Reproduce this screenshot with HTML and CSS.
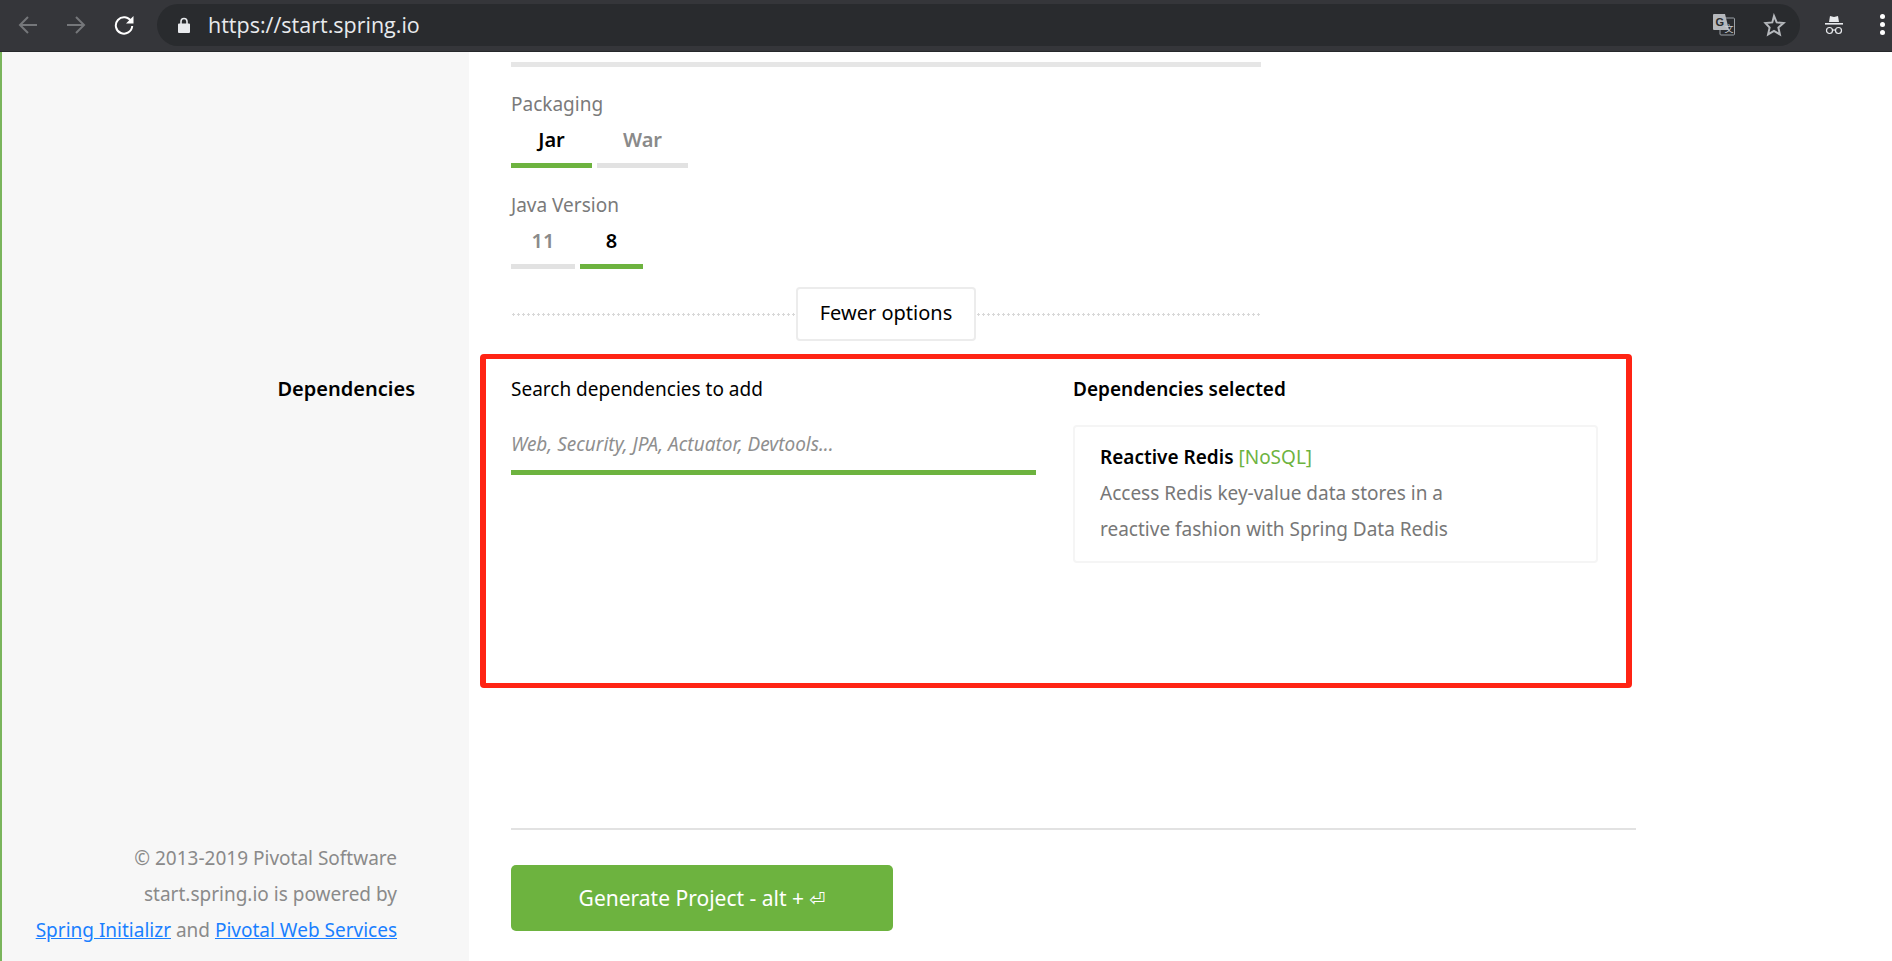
FILE: index.html
```html
<!DOCTYPE html>
<html>
<head>
    <meta charset="UTF-8">
    <title>Spring Initializr</title>
    <link rel="stylesheet" href="styles.css">
</head>
<body>

<div class="toolbar">
    <svg class="nav dim" viewBox="0 0 20 20"><path d="M19 10H2M10 2l-8 8 8 8"/></svg>
    <svg class="nav dim" viewBox="0 0 20 20"><path d="M1 10h17M10 2l8 8-8 8"/></svg>
    <svg class="nav" viewBox="0 0 20 20"><path d="M17.2 6.500A8.200 8.200 0 1 0 18.200 11"/><path class="fill" d="M19.500 1v7.500H12z"/></svg>
    <div class="omnibox">
        <svg class="lock" viewBox="0 0 12 16"><path class="body" d="M1 6.500h10a1 1 0 0 1 1 1V15a1 1 0 0 1-1 1H1a1 1 0 0 1-1-1V7.500a1 1 0 0 1 1-1z"/><path class="ring" d="M3 7V4.500a3 3 0 0 1 6 0V7"/></svg>
        <span class="url">https://start.spring.io</span>
        <svg class="translate" viewBox="0 0 22 22">
            <rect class="back" x="7" y="4" width="14.500" height="17" rx="1"/>
            <path class="front" d="M1 0h11l4 16H1a1 1 0 0 1-1-1V1a1 1 0 0 1 1-1z"/>
            <text class="g" x="2.500" y="12">G</text>
            <text class="zh" x="11.500" y="18">文</text>
        </svg>
        <svg class="star" viewBox="0 0 24 24"><path d="M12 3l2.700 6.400 6.900.6-5.200 4.600 1.500 6.800-5.900-3.600-5.900 3.600 1.500-6.800L3.400 10l6.900-.6z"/></svg>
    </div>
    <svg class="incognito" viewBox="0 0 18 20">
        <path class="hat" d="M5 1l4 1 4-1 1 6H4z"/>
        <path class="hat" d="M0 8h18v1.600H0z"/>
        <circle cx="4.500" cy="15.500" r="3"/>
        <circle cx="13.500" cy="15.500" r="3"/>
        <path d="M7.500 15h3"/>
    </svg>
    <div class="dots"><i></i><i></i><i></i></div>
</div>

<div class="page">
    <div class="side">
        <div class="side-label">Dependencies</div>
        <div class="foot">
            <p>© 2013-2019 Pivotal Software</p>
            <p>start.spring.io is powered by</p>
            <p><a href="#">Spring Initializr</a> and <a href="#">Pivotal Web Services</a></p>
        </div>
    </div>

    <div class="main">
        <div class="rule-top"></div>

        <div class="field-label">Packaging</div>
        <div class="tabs">
            <div class="tab on jar">Jar</div>
            <div class="tab war">War</div>
        </div>

        <div class="field-label">Java Version</div>
        <div class="tabs">
            <div class="tab v11">11</div>
            <div class="tab on v8">8</div>
        </div>

        <div class="more">
            <div class="more-btn">Fewer options</div>
        </div>

        <div class="mark">
            <div class="col">
                <div class="col-title">Search dependencies to add</div>
                <div class="search">Web, Security, JPA, Actuator, Devtools...</div>
            </div>
            <div class="col">
                <div class="col-title strong">Dependencies selected</div>
                <div class="card">
                    <div class="card-name">Reactive Redis <span>[NoSQL]</span></div>
                    <div class="card-desc">Access Redis key-value data stores in a<br>reactive fashion with Spring Data Redis</div>
                </div>
            </div>
        </div>

        <div class="actions">
            <div class="generate">Generate Project - alt + <span>⏎</span></div>
        </div>
    </div>
</div>

</body>
</html>
```

FILE: styles.css
```css
body{margin:0;height:961px;overflow:hidden;background:#fff;font-family:"Noto Sans",sans-serif;font-size:19px;color:#000;}
p{margin:0;}

/* browser bar */
.toolbar{
    display:flex;
    align-items:center;
    height:52px;
    box-sizing:border-box;
    padding:0 0 2px 18px;
    background:#35363a;
    border-bottom:1px solid #26282b;
}
.nav{
    width:20px;
    height:20px;
    margin-right:28px;
    flex:none;
    fill:none;
    stroke:#fff;
    stroke-width:2;
}
.nav.dim{stroke:#75777a;}
.nav .fill{fill:#fff;stroke:none;}
.omnibox{
    display:flex;
    align-items:center;
    flex:none;
    width:1643px;
    height:42px;
    margin-left:-5px;
    box-sizing:border-box;
    padding:0 14px 0 21px;
    border-radius:21px;
    background:#292b2e;
}
.lock{width:12px;height:16px;}
.lock .body{fill:#e8eaed;}
.lock .ring{fill:none;stroke:#e8eaed;stroke-width:1.600;}
.url{
    margin-left:18px;
    font-family:"Open Sans",sans-serif;
    font-size:21.500px;
    color:#e8eaed;
    flex:1;
}
.translate{width:22px;height:22px;margin-right:27px;}
.translate .back{fill:none;stroke:#9aa0a6;stroke-width:1;}
.translate .front{fill:#b5b8bc;}
.translate .g{font-family:"Liberation Sans",sans-serif;font-size:11px;font-weight:bold;fill:#292b2e;}
.translate .zh{font-family:"Noto Sans CJK SC",sans-serif;font-size:9px;fill:#c9ccd0;}
.star{width:24px;height:24px;fill:none;stroke:#b5b8bc;stroke-width:2;}
.incognito{
    width:18px;
    height:20px;
    flex:none;
    margin-left:25px;
    fill:none;
    stroke:#e8eaed;
    stroke-width:1.200;
}
.incognito .hat{fill:#e8eaed;stroke:none;}
.dots{flex:none;margin-left:37px;}
.dots i{display:block;width:5px;height:5px;margin:3px 0;border-radius:50%;background:#fff;}

/* page */
.page{display:flex;height:909px;}
.side{
    display:flex;
    flex-direction:column;
    width:469px;
    box-sizing:border-box;
    padding:325px 54px 13px 0;
    background:#f7f7f7;
    border-left:2px solid #7ab55c;
    text-align:right;
}
.side-label{
    font-weight:600;
    font-size:20px;
    line-height:24px;
}
.foot{
    margin-top:auto;
    padding-right:18px;
    color:#8a8a8a;
    line-height:36px;
    white-space:nowrap;
}
.foot a{color:#1a7fff;}

.main{
    flex:1;
    padding-left:42px;
}
.rule-top{
    width:750px;
    height:5px;
    margin-top:10px;
    background:#e6e6e6;
}
.field-label{
    margin-top:25px;
    color:#7a7a7a;
    line-height:24px;
}
.tabs{display:flex;gap:5px;margin-top:6px;}
.tab{
    height:41px;
    line-height:36px;
    border-bottom:5px solid #e2e2e2;
    text-align:center;
    font-weight:600;
    font-size:20px;
    color:#8a8a8a;
}
.tab.on{border-bottom-color:#6db33f;color:#000;}
.jar{width:81px;}
.war{width:91px;}
.v11{width:64px;}
.v8{width:63px;}

.more{
    display:flex;
    justify-content:center;
    align-items:center;
    width:750px;
    height:54px;
    margin-top:18px;
    background:radial-gradient(circle,#d8d8d8 1px,transparent 1.300px) 0 center/5px 3px repeat-x;
}
.more-btn{
    width:180px;
    height:54px;
    box-sizing:border-box;
    border:2px solid #ececec;
    border-radius:4px;
    background:#fff;
    text-align:center;
    line-height:48px;
    font-size:20px;
}

/* the red annotation round the dependency picker */
.mark{
    display:flex;
    gap:37px;
    width:1152px;
    height:334px;
    box-sizing:border-box;
    margin:13px 0 0 -31px;
    padding:18px 0 0 25px;
    border:solid #ff2414;
    border-width:5px 6px;
    border-radius:4px;
}
.col{width:525px;}
.col-title{line-height:24px;}
.col-title.strong{font-weight:600;}
.search{
    height:65px;
    margin-top:9px;
    box-sizing:border-box;
    border-bottom:5px solid #6db33f;
    line-height:68px;
    font-style:italic;
    color:#8f8f8f;
}
.card{
    height:138px;
    margin-top:24px;
    box-sizing:border-box;
    padding:12px 25px 0;
    border:2px solid #f5f5f5;
    border-radius:4px;
}
.card-name{font-weight:600;line-height:36px;}
.card-name span{font-weight:400;color:#6db33f;}
.card-desc{color:#777;line-height:36px;}

.actions{
    width:1125px;
    height:101px;
    margin-top:140px;
    padding-top:35px;
    box-sizing:border-box;
    border-top:2px solid #e2e2e2;
}
.generate{
    width:382px;
    height:66px;
    border-radius:5px;
    background:#6db33f;
    color:#fff;
    font-size:21px;
    line-height:66px;
    text-align:center;
}
.generate span{font-family:"DejaVu Sans",sans-serif;font-size:19px;}
```
